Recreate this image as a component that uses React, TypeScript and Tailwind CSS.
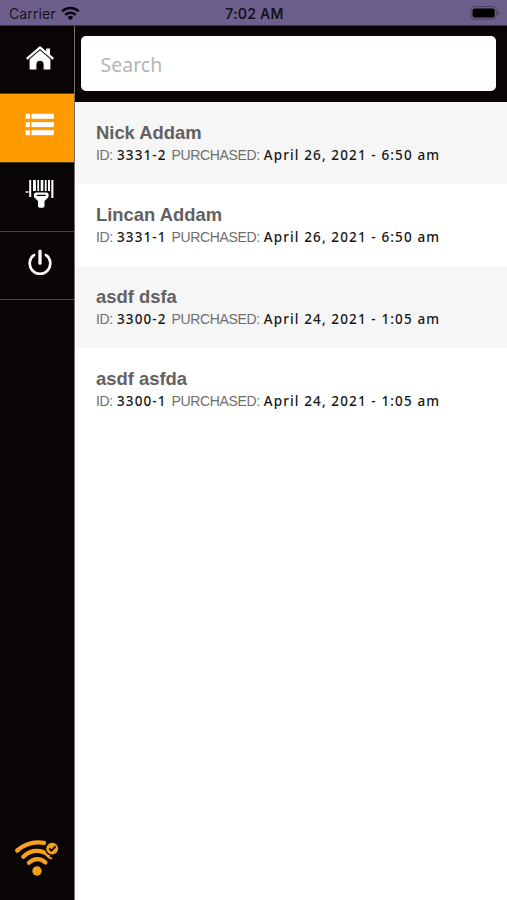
import React from 'react';

interface Purchase {
  id: string;
  name: string;
  date: string;
}

const PURCHASES: Purchase[] = [
  { id: '3331-2', name: 'Nick Addam', date: 'April 26, 2021 - 6:50 am' },
  { id: '3331-1', name: 'Lincan Addam', date: 'April 26, 2021 - 6:50 am' },
  { id: '3300-2', name: 'asdf dsfa', date: 'April 24, 2021 - 1:05 am' },
  { id: '3300-1', name: 'asdf asfda', date: 'April 24, 2021 - 1:05 am' },
];

const HomeIcon = () => (
  <svg width="30" height="26" viewBox="0 0 30 26" fill="#fff">
    <path d="M15 .9 1 12.9l1.5 1.8L15 4l12.5 10.7 1.5-1.8-4-3.5V3.6h-3.8v2.6z" />
    <path d="M15 5.3 4.6 14.2V24.6h6.8v-5.2a3.6 3.6 0 0 1 7.2 0v5.2h6.8V14.2z" />
  </svg>
);

const ListIcon = () => (
  <svg width="30" height="24" viewBox="0 0 30 24" fill="#fff">
    {[0.8, 9.1, 17.2].map((y) => (
      <g key={y}>
        <rect x="0.7" y={y} width="4.3" height="5" />
        <rect x="6.4" y={y} width="22.4" height="5" />
      </g>
    ))}
  </svg>
);

const ScanIcon = () => (
  <svg width="30" height="30" viewBox="0 0 30 30" fill="#fff">
    <rect x="0.6" y="12.3" width="3" height="1.4" />
    <rect x="4.2" y="1" width="2" height="17" />
    <rect x="8" y="1" width="2.9" height="11" />
    <rect x="12.3" y="1" width="1.8" height="11" />
    <rect x="15.7" y="1" width="2.6" height="11" />
    <rect x="19.8" y="1" width="1.8" height="11" />
    <rect x="23" y="1" width="2" height="11" />
    <rect x="26.3" y="1" width="2.1" height="18" />
    <path
      fillRule="evenodd"
      d="M11.2 13.5h10.2q2.2 0 2.2 2v1.8q0 1-1 1.8l-3.1 3V27q0 1.8-1.7 1.8h-3.1q-1.7 0-1.7-1.8v-4.9l-3.1-3q-1-.8-1-1.8v-1.8q0-2 2.3-2zm1 2.3q-.9 0-.6.7.3.6 1.4.6h6.5q1.1 0 1.4-.6.3-.7-.6-.7z"
    />
  </svg>
);

const PowerIcon = () => (
  <svg width="30" height="30" viewBox="0 0 30 30" fill="none" stroke="#fff" strokeLinecap="round">
    <path strokeWidth="2.7" d="M9.1 7a10.3 10.3 0 1 0 11.8 0" />
    <path strokeWidth="3.3" d="M15 3.2v12" />
  </svg>
);

const WifiCheckIcon = () => (
  <svg width="48" height="40" viewBox="0 0 48 40" fill="none" stroke="#f9a01b" strokeLinecap="round" strokeWidth="4.3">
    <path d="M5.2 12.5C12.5 6.2 22 3.4 32 4.9" />
    <path d="M11.3 18.7C19 11.3 29 11.2 36.5 17" />
    <path d="M17 24.7C22 19.9 29 19.9 33.4 24.4" />
    <circle cx="25" cy="33" r="4.7" fill="#f9a01b" stroke="none" />
    <circle cx="40.2" cy="10.6" r="7.4" fill="#080504" stroke="none" />
    <circle cx="40.2" cy="10.6" r="5.9" fill="#f9a01b" stroke="none" />
    <path stroke="#080504" strokeWidth="1.8" strokeLinecap="butt" d="m37.2 10.4 2.2 2.3 4.2-4.4" />
    <path strokeWidth="1.8" d="M35.5 18.3q2 2 4 2" />
  </svg>
);

const StatusBar = () => (
  <header className="grid h-[26px] shrink-0 grid-cols-3 items-center border-b border-[#39314a] bg-[#6c5f8b] pt-px pl-[9px] pr-[7px] font-[Inter,sans-serif] text-[14px] text-[#16121f]">
    <div className="flex items-center gap-[5px]">
      <span className="tracking-[0.1px]">Carrier</span>
      <svg width="19" height="15" viewBox="0 0 19 15" fill="none" stroke="#08060c" strokeWidth="2.5">
        <path d="M1.1 5.4a11.8 11.8 0 0 1 16.6 0" />
        <path d="M4.2 8.8a7.4 7.4 0 0 1 10.4 0" />
        <path d="M9.4 14.2 6.5 11.3a4.1 4.1 0 0 1 5.8 0z" fill="#08060c" stroke="none" />
      </svg>
    </div>
    <span className="text-center font-semibold tracking-[0.25px]">7:02 AM</span>
    <svg className="justify-self-end" width="30" height="14" viewBox="0 0 30 14">
      <rect x="0.8" y="0.6" width="25.6" height="12.6" rx="3.6" fill="none" stroke="#4a405f" />
      <rect x="2.5" y="2.4" width="22.2" height="9" rx="2" fill="#000" />
      <path d="M27.7 4.8q1.8.7 1.8 2.1t-1.8 2.1z" fill="#4a405f" />
    </svg>
  </header>
);

const NavButton: React.FC<{ label: string; active?: boolean; children: React.ReactNode }> = ({ label, active, children }) => (
  <button
    aria-label={label}
    className={`flex w-full items-center justify-center border-b pl-[5px] first:h-[68px] first:pb-1 ${
      active ? 'h-[69px] border-[#4a3a28] bg-[#ff9b00] pb-1.5' : 'h-[68.5px] border-[#48433f] pb-[5px]'
    }`}
  >
    {children}
  </button>
);

const Sidebar = () => (
  <nav className="flex w-[75px] shrink-0 flex-col justify-between border-r border-[#77716e] bg-[#080504]">
    <div>
      <NavButton label="Home"><HomeIcon /></NavButton>
      <NavButton label="Purchases" active><ListIcon /></NavButton>
      <NavButton label="Scan"><ScanIcon /></NavButton>
      <NavButton label="Log out"><PowerIcon /></NavButton>
    </div>
    <div className="pb-[22px] pl-3">
      <WifiCheckIcon />
    </div>
  </nav>
);

const PurchaseRow: React.FC<{ purchase: Purchase }> = ({ purchase }) => (
  <li className="h-[82px] pt-[19px] pl-5 odd:bg-[#f6f6f6]">
    <h3 className="text-[18.4px] leading-6 font-bold text-[#626262]">{purchase.name}</h3>
    <p className="flex items-baseline text-[14px] leading-5 whitespace-nowrap text-[#6e6e6e]">
      <span className="w-[21px] tracking-[-0.4px]">ID:</span>
      <span className="w-[54.5px] font-['Noto_Sans',sans-serif] text-[13.5px] font-medium tracking-[1.1px] text-[#161616]">{purchase.id}</span>
      <span className="w-[92.3px] tracking-[-0.35px]">PURCHASED:</span>
      <span className="font-['Noto_Sans',sans-serif] text-[13.5px] font-medium tracking-[1.12px] text-[#161616]">{purchase.date}</span>
    </p>
  </li>
);

const App: React.FC = () => {
  return (
    <div className="flex h-screen w-full flex-col overflow-hidden bg-white font-['Liberation_Sans',sans-serif]">
      <StatusBar />
      <div className="flex min-h-0 flex-1">
        <Sidebar />
        <main className="flex-1">
          <div className="h-[76px] bg-[#080504] pt-[10.4px] pr-[11px] pl-[5.5px]">
            <input
              type="text"
              placeholder="Search"
              className="h-[55px] w-full rounded-[5px] bg-white pt-0.5 pl-5 font-['Noto_Sans',sans-serif] text-[19.5px] text-gray-700 outline-none placeholder:text-[#b4b4b4]"
            />
          </div>
          <ul className="pl-px">
            {PURCHASES.map((purchase) => (
              <PurchaseRow key={purchase.id} purchase={purchase} />
            ))}
          </ul>
        </main>
      </div>
    </div>
  );
};

export default App;
